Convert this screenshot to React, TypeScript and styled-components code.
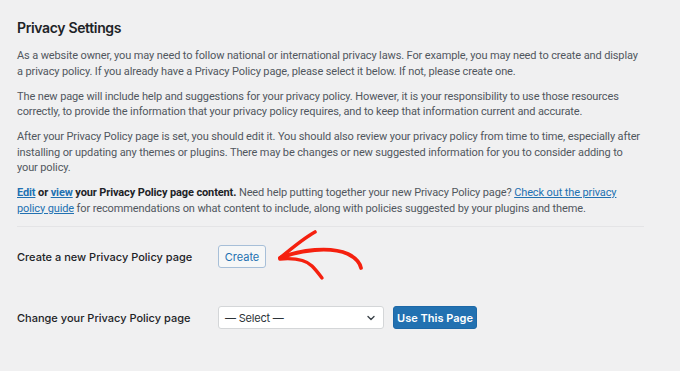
import React from "react";
import styled, { createGlobalStyle } from "styled-components";

const Global = createGlobalStyle`
  html, body { margin: 0; padding: 0; background: #f0f0f1; }
  body { font-family: Inter, "Noto Sans", sans-serif; -webkit-font-smoothing: antialiased; }
`;

const Page = styled.div`
  position: relative;
  width: 680px;
  height: 371px;
  box-sizing: border-box;
  padding: 18px 36px 0 17px;
  background: #f0f0f1;
  overflow: hidden;
`;

const Title = styled.h2`
  margin: 0 0 10px;
  font-size: 14px;
  line-height: 20px;
  font-weight: 600;
  letter-spacing: -0.35px;
  color: #1d2327;
`;

const Para = styled.p`
  margin: 0 0 9.5px;
  font-family: Roboto, Inter, sans-serif;
  font-size: 11px;
  line-height: 15.5px;
  letter-spacing: -0.12px;
  white-space: nowrap;
  color: #50575e;
`;

const Strong = styled.strong`
  font-weight: 700;
  color: #1d2327;
`;

const Link = styled.a`
  color: #2271b1;
  text-decoration: underline;
  text-underline-offset: 1px;
`;

const Divider = styled.hr`
  margin: 10px 0 0;
  border: 0;
  border-top: 1px solid #e4e4e6;
`;

const Row = styled.div<{ $top: number }>`
  display: grid;
  grid-template-columns: 192px auto auto;
  column-gap: 9px;
  align-items: center;
  justify-content: start;
  margin-top: ${(p) => p.$top}px;
`;

const Label = styled.span`
  font-size: 11px;
  font-weight: 500;
  color: #1d2327;
`;

const SecondaryButton = styled.button`
  height: 23px;
  width: 48px;
  padding: 0;
  box-sizing: border-box;
  border: 1px solid #a7bfd8;
  border-radius: 3px;
  background: #f6f7f7;
  color: #2271b1;
  font-family: inherit;
  font-size: 11px;
`;

const Select = styled.div`
  display: flex;
  align-items: center;
  justify-content: space-between;
  width: 166px;
  height: 23px;
  box-sizing: border-box;
  padding: 0 7px 0 6px;
  border: 1px solid #d4d6d8;
  border-radius: 3px;
  background: #fff;
  color: #2c3338;
  font-size: 11px;
  letter-spacing: -0.2px;
`;

const PrimaryButton = styled.button`
  height: 23px;
  width: 84px;
  padding: 0;
  box-sizing: border-box;
  border: 1px solid #1d68a7;
  border-radius: 3px;
  background: #2271b1;
  color: #fff;
  font-family: inherit;
  font-size: 11px;
  font-weight: 600;
`;

const Arrow = styled.svg`
  position: absolute;
  left: 270px;
  top: 225px;
  width: 100px;
  height: 60px;
  overflow: visible;
`;

export default function App() {
  return (
    <>
      <Global />
      <Page>
        <Title>Privacy Settings</Title>
        <Para>
          As a website owner, you may need to follow national or international privacy laws. For example, you may need to create and display
          <br />
          a privacy policy. If you already have a Privacy Policy page, please select it below. If not, please create one.
        </Para>
        <Para>
          The new page will include help and suggestions for your privacy policy. However, it is your responsibility to use those resources
          <br />
          correctly, to provide the information that your privacy policy requires, and to keep that information current and accurate.
        </Para>
        <Para>
          After your Privacy Policy page is set, you should edit it. You should also review your privacy policy from time to time, especially after
          <br />
          installing or updating any themes or plugins. There may be changes or new suggested information for you to consider adding to
          <br />
          your policy.
        </Para>
        <Para>
          <Strong>
            <Link href="#">Edit</Link> or <Link href="#">view</Link> your Privacy Policy page content.
          </Strong>{" "}
          Need help putting together your new Privacy Policy page? <Link href="#">Check out the privacy
          <br />
          policy guide</Link> for recommendations on what content to include, along with policies suggested by your plugins and theme.
        </Para>
        <Divider />
        <Row $top={18}>
          <Label>Create a new Privacy Policy page</Label>
          <SecondaryButton>Create</SecondaryButton>
        </Row>
        <Row $top={38}>
          <Label>Change your Privacy Policy page</Label>
          <Select>
            <span>— Select —</span>
            <svg width="10" height="10" viewBox="0 0 10 10">
              <path d="M2 3.5 L5 6.5 L8 3.5" fill="none" stroke="#3c434a" strokeWidth="1.4" strokeLinecap="round" strokeLinejoin="round" />
            </svg>
          </Select>
          <PrimaryButton>Use This Page</PrimaryButton>
        </Row>
        <Arrow viewBox="270 225 100 60">
          <g fill="none" stroke="#f5200f" strokeLinecap="round" strokeLinejoin="round">
            <path strokeWidth="3.8" d="M280 258 C 300 250, 330 246, 348 254 C 356 258, 360 263, 361 268" />
            <path strokeWidth="3.6" d="M280 258 C 292 248, 304 238, 315 232" />
            <path strokeWidth="3.4" d="M280 259 C 292 258, 305 259, 312 266 C 316 270, 319 274, 322 278" />
          </g>
        </Arrow>
      </Page>
    </>
  );
}
